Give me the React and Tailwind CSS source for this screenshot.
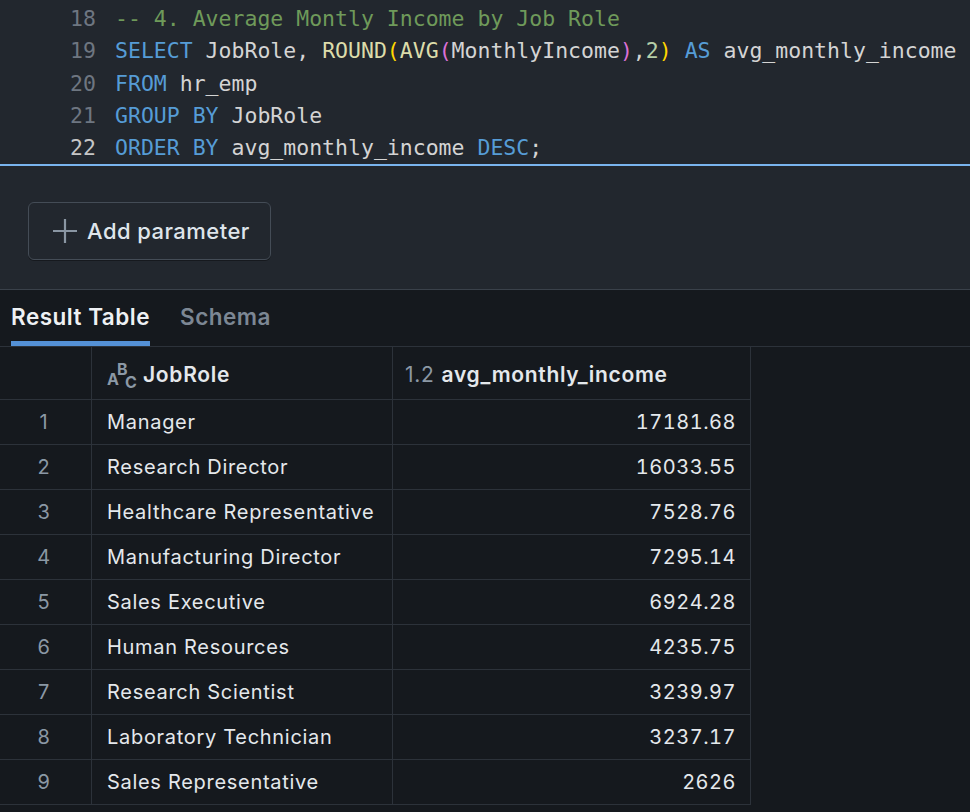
import React from 'react';

const mono = { fontFamily: '"DejaVu Sans Mono", "Liberation Mono", monospace' };

const K = ({ children }) => <span className="text-[#569cd6]">{children}</span>;
const F = ({ children }) => <span className="text-[#dcdcaa]">{children}</span>;

const codeLines = [
  { n: 18, body: <span className="text-[#6f9a5a]">-- 4. Average Montly Income by Job Role</span> },
  {
    n: 19,
    body: (
      <>
        <K>SELECT</K> JobRole, <F>ROUND</F>
        <span className="text-[#ffd700]">(</span>
        <F>AVG</F>
        <span className="text-[#da70d6]">(</span>MonthlyIncome<span className="text-[#da70d6]">)</span>,
        <span className="text-[#b5cea8]">2</span>
        <span className="text-[#ffd700]">)</span> <K>AS</K> avg_monthly_income
      </>
    ),
  },
  { n: 20, body: <><K>FROM</K> hr_emp</> },
  { n: 21, body: <><K>GROUP BY</K> JobRole</> },
  { n: 22, active: true, body: <><K>ORDER BY</K> avg_monthly_income <K>DESC</K>;</> },
];

const rows = [
  ['Manager', '17181.68'],
  ['Research Director', '16033.55'],
  ['Healthcare Representative', '7528.76'],
  ['Manufacturing Director', '7295.14'],
  ['Sales Executive', '6924.28'],
  ['Human Resources', '4235.75'],
  ['Research Scientist', '3239.97'],
  ['Laboratory Technician', '3237.17'],
  ['Sales Representative', '2626'],
];

function AbcIcon() {
  return (
    <span className="relative inline-block w-[28px] h-[28px] text-[#8b98a5] font-bold leading-none tracking-normal">
      <span className="absolute left-0 bottom-[2px] text-[16px]">A</span>
      <span className="absolute left-[10px] top-[0px] text-[16px]">B</span>
      <span className="absolute left-[18px] bottom-[-1px] text-[16px]">C</span>
    </span>
  );
}

export default function App() {
  return (
    <div
      className="w-[970px] h-[812px] overflow-hidden bg-[#15191e]"
      style={{ fontFamily: 'Inter, "Noto Sans", "Liberation Sans", sans-serif' }}
    >
      {/* editor */}
      <div className="bg-[#22272e] pt-[3px] h-[164px] overflow-hidden" style={mono}>
        {codeLines.map((l) => (
          <div key={l.n} className="flex h-[32.3px] items-center text-[21.5px] whitespace-pre text-[#d4d4d4]">
            <span className={`w-[96px] text-right ${l.active ? 'text-[#c6c6c6]' : 'text-[#6e7681]'}`}>{l.n}</span>
            <span className="ml-[19px]">{l.body}</span>
          </div>
        ))}
      </div>
      <div className="h-[2px] bg-[#7ab4ee]" />

      {/* parameters */}
      <div className="h-[124px] bg-[#22272e] border-b border-[#3a414a] pt-[36px] pl-[28px]">
        <button className="flex items-center h-[58px] w-[243px] rounded-[6px] border border-[#444c56] bg-[#22272e] shadow-[0_1px_0_rgba(0,0,0,0.35)] pl-[23px] text-[#dfe5eb] text-[22px] tracking-[0.45px] font-medium">
          <svg width="26" height="26" viewBox="0 0 26 26" className="mr-[9px]">
            <path d="M13 1v24M1 13h24" stroke="#8a96a3" strokeWidth="2.2" />
          </svg>
          Add parameter
        </button>
      </div>

      {/* tabs */}
      <div className="flex gap-[30px] h-[57px] px-[11px] border-b border-[#2c323a]">
        <div className="flex flex-col justify-end">
          <span className="text-[22.5px] tracking-[0.5px] font-semibold text-[#eef1f4] leading-none pb-[13px]">Result Table</span>
          <div className="h-[5px] bg-[#5491d6]" />
        </div>
        <div className="flex flex-col justify-end">
          <span className="text-[22.5px] tracking-[0.5px] font-semibold text-[#7c8794] leading-none pb-[18px]">Schema</span>
        </div>
      </div>

      {/* table */}
      <div className="w-[751px] text-[20px] tracking-[0.7px] text-[#e4e8ec]">
        <div className="grid grid-cols-[92px_301px_358px] h-[53px] border-b border-[#2c323a] text-[21px]">
          <div className="border-r border-[#2c323a]" />
          <div className="flex items-center pl-[15px] pt-[3px] border-r border-[#2c323a] gap-[8px]">
            <AbcIcon />
            <span className="font-semibold">JobRole</span>
          </div>
          <div className="flex items-center pl-[12px] pt-[3px] border-r border-[#2c323a] gap-[7px]">
            <span className="text-[#8b98a5] font-normal">1.2</span>
            <span className="font-semibold">avg_monthly_income</span>
          </div>
        </div>
        {rows.map(([role, val], i) => (
          <div key={role} className="grid grid-cols-[92px_301px_358px] h-[45px] border-b border-[#2c323a]">
            <div className="flex items-center justify-center text-[#8b98a5] border-r border-[#2c323a] pr-[3px]">{i + 1}</div>
            <div className="flex items-center pl-[15px] border-r border-[#2c323a]">{role}</div>
            <div className="flex items-center justify-end pr-[14px] border-r border-[#2c323a] tabular-nums tracking-[0.5px]">{val}</div>
          </div>
        ))}
      </div>
    </div>
  );
}
